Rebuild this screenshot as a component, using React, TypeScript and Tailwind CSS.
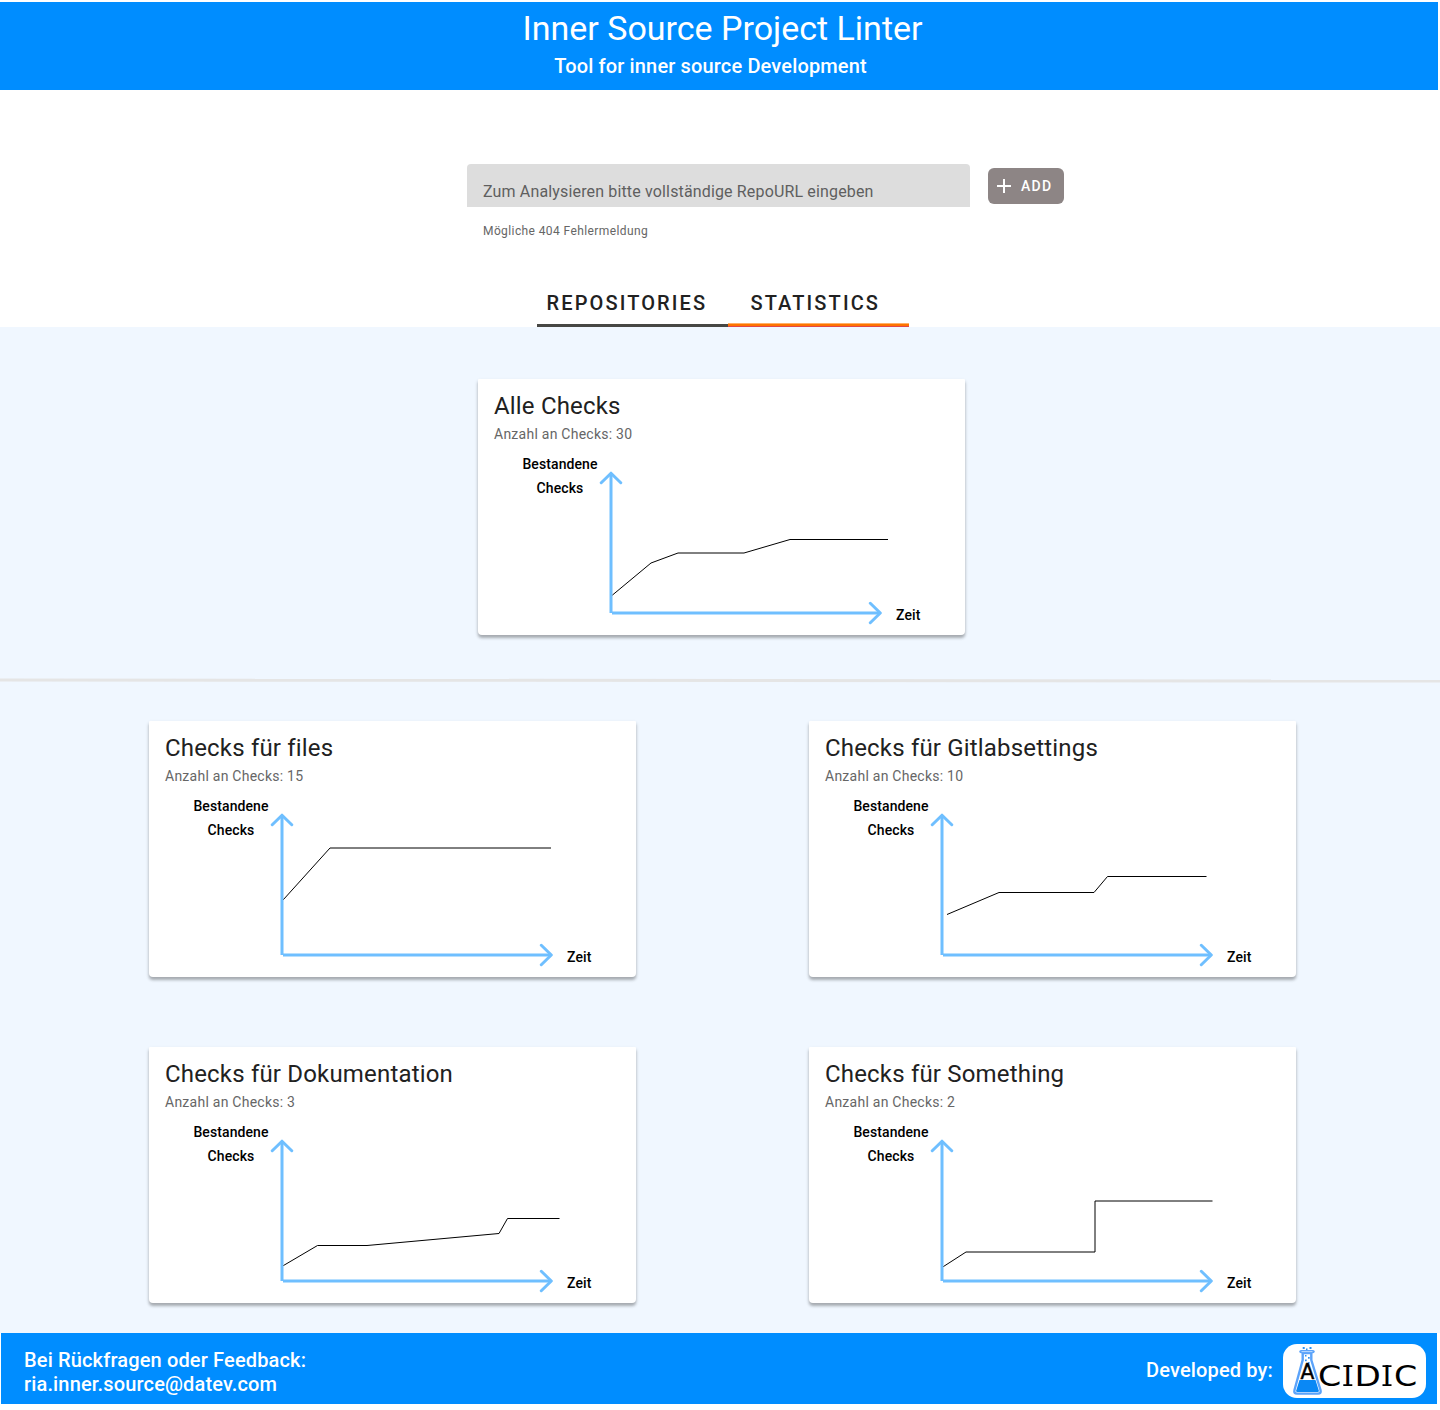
import React from "react";

type Check = { title: string; count: number; points: string };

const all: Check = { title: "Alle Checks", count: 30, points: "134.5,216 173,184 200,174 266,174 312,160.5 410,160.5" };

const groups: Check[] = [
  { title: "Checks für files", count: 15, points: "134.5,178.5 181,127 402,127" },
  { title: "Checks für Gitlabsettings", count: 10, points: "138,193.5 190,171.5 285,171.5 298.5,155.5 397.5,155.5" },
  { title: "Checks für Dokumentation", count: 3, points: "134.5,218.5 168.5,198.5 218,198.5 350,186.5 358.5,171.5 410.5,171.5" },
  { title: "Checks für Something", count: 2, points: "134.5,219.5 157,205 286,205 286,154 403.5,154" },
];

function ChartCard({ title, count, points }: Check) {
  return (
    <section className="relative h-[256px] w-[487px] rounded-b-[4px] rounded-t-[1px] bg-white px-4 pt-[11px] shadow-[0_3px_3px_rgba(0,0,0,0.25),0_2px_4px_rgba(0,0,0,0.1)]">
      <h2 className="text-[24px] leading-8 tracking-[0.18px] text-[#212121]">{title}</h2>
      <p className="mt-[2px] text-[14px] leading-5 tracking-[0.25px] text-[#666666]">Anzahl an Checks: {count}</p>
      <div className="ml-7 mt-2 w-[76px] text-center text-[14px] font-medium leading-6 tracking-[0.1px] text-black">
        Bestandene
        <br />
        Checks
      </div>
      <svg className="absolute left-0 top-0" width="487" height="256" viewBox="0 0 487 256" fill="none">
        <g stroke="#6fbfff" strokeWidth="3">
          <path d="M133 234V95M134 234H402" />
          <path d="M123.250 103.700L133 94.200L142.750 103.700M392.300 224.250L402.300 234L392.300 243.750" strokeLinecap="round" strokeLinejoin="round" />
        </g>
        <polyline points={points} stroke="#000" strokeWidth="1" />
      </svg>
      <span className="absolute left-[418px] top-[224px] text-[14px] font-medium leading-6 tracking-[0.1px] text-black">Zeit</span>
    </section>
  );
}

function Logo() {
  return (
    <svg width="143" height="54" viewBox="0 0 143 54" fill="none">
      <rect width="143" height="54" rx="14" fill="#fff" />
      <path d="M19.700 9V16L11.500 46Q10.600 49.600 14 49.600H35Q38.400 49.600 37.500 46L28.300 16V9Z" fill="#fff" stroke="#5ba3fa" strokeWidth="2.400" strokeLinejoin="round" />
      <path d="M18 7.600H30" stroke="#5ba3fa" strokeWidth="3.400" strokeLinecap="round" />
      <path d="M18.500 7.600H29.500" stroke="#d5e8ff" strokeWidth="0.800" />
      <path d="M16.500 36H32.500L35.800 46.500Q36 48 34.800 48H14.200Q12.900 48 13.200 46.500Z" fill="#0a88f5" />
      <g fill="#2e91f0">
        <rect x="19.700" y="3" width="2" height="2" />
        <rect x="26.500" y="3" width="2" height="2" />
        <rect x="23" y="4.500" width="1.500" height="1.500" />
        <rect x="22" y="11" width="1.500" height="1.500" />
        <rect x="25" y="13" width="1.700" height="1.700" />
        <rect x="22" y="15.500" width="1.700" height="1.700" />
        <rect x="25.200" y="18" width="1.400" height="1.400" />
      </g>
      <g fontFamily="DejaVu Sans" fill="#000">
        <text transform="translate(17.400 35) scale(0.940 1)" fontSize="21.500" stroke="#000" strokeWidth="0.500">A</text>
        <g fontSize="28.500">
          <text transform="translate(35 42) scale(1.170 1)">C</text>
          <text x="60.600" y="42">I</text>
          <text transform="translate(71.500 42) scale(1.200 1)">D</text>
          <text x="99.800" y="42">I</text>
          <text transform="translate(111 42) scale(1.170 1)">C</text>
        </g>
      </g>
      <path d="M60.300 22.200H69.300M60.300 41.200H69.300M99.500 22.200H108.500M99.500 41.200H108.500" stroke="#000" strokeWidth="1.800" />
    </svg>
  );
}

export default function App() {
  return (
    <div className="h-[1410px] w-[1440px] overflow-hidden bg-white pt-[2px] font-['Roboto',sans-serif]">
      <header className="flex h-[88px] w-[1438px] flex-col items-center bg-[#008dff] text-white">
        <h1 className="mt-[6px] pl-[7px] text-[34px] leading-10">Inner Source Project Linter</h1>
        <p className="mr-[17px] mt-[6px] text-[20px] font-medium leading-6 tracking-[0.15px]">Tool for inner source Development</p>
      </header>

      <div className="flex h-[199px] items-start pl-[467px] pt-[74px]">
        <div className="w-[503px]">
          <div className="h-[43px] rounded-t-[4px] bg-[#dddddd] px-4 pt-4 text-[16px] leading-6 tracking-[0.15px] text-[#5f5f5f]">
            Zum Analysieren bitte vollständige RepoURL eingeben
          </div>
          <p className="mt-4 pl-4 text-[12px] leading-4 tracking-[0.4px] text-[#666666]">Mögliche 404 Fehlermeldung</p>
        </div>
        <button className="ml-[18px] mt-1 flex h-9 w-[76px] items-center rounded-[6px] bg-[#8d8585] pl-[9px] text-[14px] font-medium tracking-[1.25px] text-white">
          <svg className="mr-[10px]" width="14" height="14" viewBox="0 0 14 14" fill="none" stroke="#fff" strokeWidth="2">
            <path d="M7 0V14M0 7H14" />
          </svg>
          ADD
        </button>
      </div>

      <nav className="ml-[537px] flex h-[38px] text-[20px] font-medium tracking-[2.12px] text-[#212121]">
        <div className="w-[191px] border-b-[3px] border-[#474744] pl-[9.500px] leading-[29px]">REPOSITORIES</div>
        <div className="flex w-[181px] flex-col justify-between">
          <span className="pl-[22.500px] leading-[29px]">STATISTICS</span>
          <span className="h-[4px] border-b border-t border-b-[#e0484a] border-t-[#ffb066] bg-[#ff7300]" />
        </div>
      </nav>

      <main className="h-[1006px] bg-[#f0f7ff] pt-[52px]">
        <div className="pl-[478px]">
          <ChartCard {...all} />
        </div>
        <div className="mt-[43.500px] h-[3px] w-[1440px] rotate-[0.04deg] bg-[#e5e5e5]" />
        <div className="ml-[149px] mt-[39.500px] grid w-max grid-cols-2 gap-x-[173px] gap-y-[70px]">
          {groups.map((g) => (
            <ChartCard key={g.title} {...g} />
          ))}
        </div>
      </main>

      <footer className="ml-px flex h-[71px] w-[1436px] items-center justify-between bg-[#008dff] pl-[23px] pr-[11px] text-[20px] font-medium leading-6 tracking-[0.15px] text-white">
        <p className="pt-[7px]">
          Bei Rückfragen oder Feedback:
          <br />
          ria.inner.source@datev.com
        </p>
        <div className="flex items-center gap-[10px] pt-[5px]">
          <span className="pb-[2px]">Developed by:</span>
          <Logo />
        </div>
      </footer>
    </div>
  );
}
